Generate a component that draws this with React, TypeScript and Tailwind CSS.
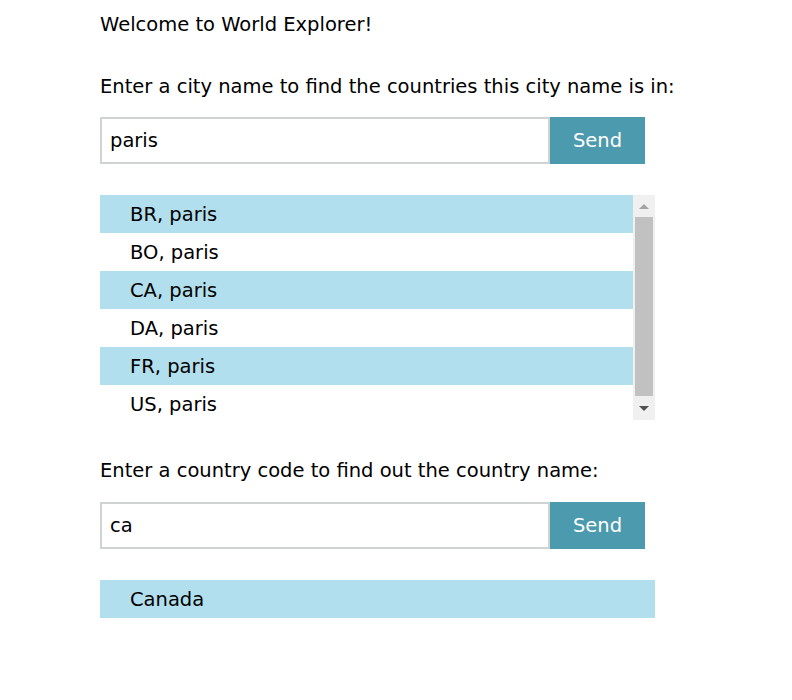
import React from "react";

const cities = ["BR, paris", "BO, paris", "CA, paris", "DA, paris", "FR, paris", "US, paris"];

export default function App() {
  return (
    <div className="w-[792px] h-[700px] bg-white text-[19.5px] text-black" style={{ fontFamily: '"DejaVu Sans", sans-serif' }}>
      <div className="ml-[100px] w-[555px] pt-[13px] flex flex-col">
        <p className="leading-[24px] whitespace-nowrap">Welcome to World Explorer!</p>
        <p className="leading-[24px] mt-[38px] whitespace-nowrap">Enter a city name to find the countries this city name is in:</p>
        <div className="flex mt-[18px] h-[47px]">
          <div className="w-[450px] border-2 border-[#cfd3d3] flex items-center pl-[8px]">paris</div>
          <button className="w-[95px] bg-[#4b9aae] text-white pt-[1px]">Send</button>
        </div>
        <div className="mt-[31px] h-[225px] flex overflow-hidden">
          <div className="flex-1 flex flex-col">
            {cities.map((c, i) => (
              <div key={c} className={"h-[38px] shrink-0 flex items-center pl-[30px] pt-[2px] " + (i % 2 === 0 ? "bg-[#b1dfed]" : "bg-white")}>
                {c}
              </div>
            ))}
          </div>
          <div className="w-[22px] bg-[#f0f0f0] flex flex-col items-center">
            <div className="h-[22px] flex items-center justify-center">
              <div className="w-0 h-0 border-l-[5px] border-r-[5px] border-b-[5px] border-l-transparent border-r-transparent border-b-[#a3a3a3]" />
            </div>
            <div className="w-[18px] flex-1 bg-[#c1c1c1]" />
            <div className="h-[24px] flex items-center justify-center">
              <div className="w-0 h-0 border-l-[5px] border-r-[5px] border-t-[5px] border-l-transparent border-r-transparent border-t-[#505050]" />
            </div>
          </div>
        </div>
        <p className="leading-[24px] mt-[39px] whitespace-nowrap">Enter a country code to find out the country name:</p>
        <div className="flex mt-[19px] h-[47px]">
          <div className="w-[450px] border-2 border-[#cfd3d3] flex items-center pl-[8px]">ca</div>
          <button className="w-[95px] bg-[#4b9aae] text-white pt-[1px]">Send</button>
        </div>
        <div className="mt-[31px] h-[38px] bg-[#b1dfed] flex items-center pl-[30px] pt-[2px]">Canada</div>
      </div>
    </div>
  );
}
